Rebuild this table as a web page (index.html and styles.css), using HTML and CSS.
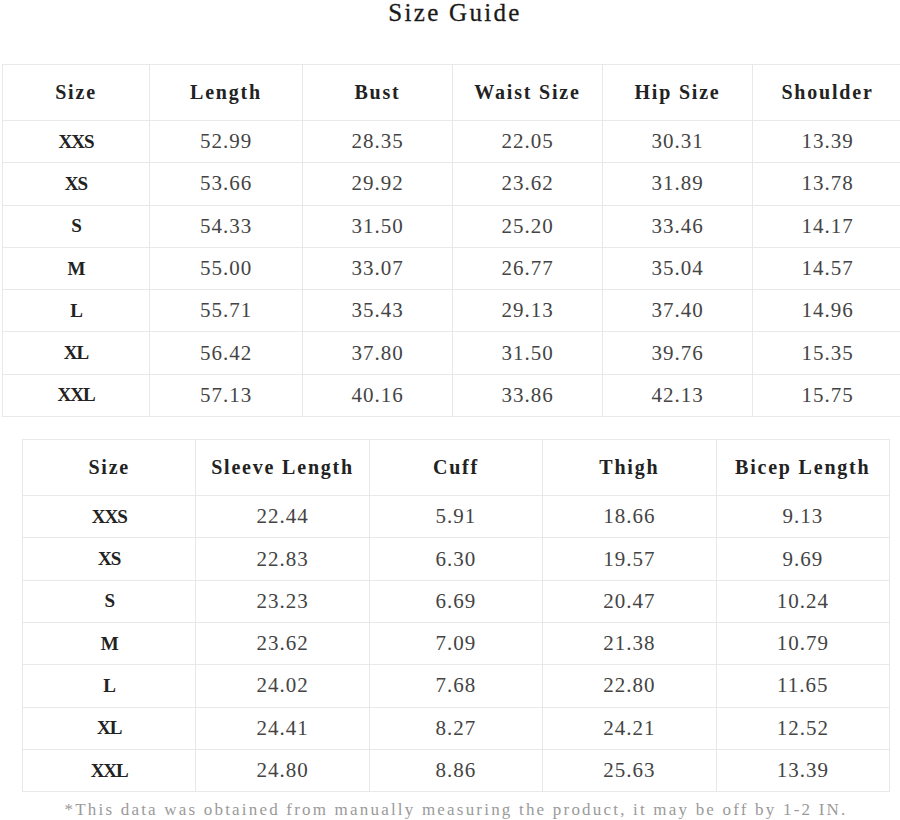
FILE: index.html
```html
<!DOCTYPE html>
<html>
<head>
<meta charset="utf-8">
<link rel="stylesheet" href="styles.css">
</head>
<body>
<div class="page">
  <h1 class="title">Size Guide</h1>
  <table class="grid grid-one">
    <colgroup>
      <col class="c1-size"><col class="c1-len"><col class="c1-std"><col class="c1-std"><col class="c1-std"><col class="c1-std">
    </colgroup>
    <thead>
      <tr><th>Size</th><th>Length</th><th>Bust</th><th>Waist Size</th><th>Hip Size</th><th>Shoulder</th></tr>
    </thead>
    <tbody>
      <tr><th>XXS</th><td>52.99</td><td>28.35</td><td>22.05</td><td>30.31</td><td>13.39</td></tr>
      <tr><th>XS</th><td>53.66</td><td>29.92</td><td>23.62</td><td>31.89</td><td>13.78</td></tr>
      <tr><th>S</th><td>54.33</td><td>31.50</td><td>25.20</td><td>33.46</td><td>14.17</td></tr>
      <tr><th>M</th><td>55.00</td><td>33.07</td><td>26.77</td><td>35.04</td><td>14.57</td></tr>
      <tr><th>L</th><td>55.71</td><td>35.43</td><td>29.13</td><td>37.40</td><td>14.96</td></tr>
      <tr><th>XL</th><td>56.42</td><td>37.80</td><td>31.50</td><td>39.76</td><td>15.35</td></tr>
      <tr><th>XXL</th><td>57.13</td><td>40.16</td><td>33.86</td><td>42.13</td><td>15.75</td></tr>
    </tbody>
  </table>
  <table class="grid grid-two">
    <colgroup>
      <col class="c2"><col class="c2"><col class="c2"><col class="c2"><col class="c2">
    </colgroup>
    <thead>
      <tr><th>Size</th><th>Sleeve Length</th><th>Cuff</th><th>Thigh</th><th>Bicep Length</th></tr>
    </thead>
    <tbody>
      <tr><th>XXS</th><td>22.44</td><td>5.91</td><td>18.66</td><td>9.13</td></tr>
      <tr><th>XS</th><td>22.83</td><td>6.30</td><td>19.57</td><td>9.69</td></tr>
      <tr><th>S</th><td>23.23</td><td>6.69</td><td>20.47</td><td>10.24</td></tr>
      <tr><th>M</th><td>23.62</td><td>7.09</td><td>21.38</td><td>10.79</td></tr>
      <tr><th>L</th><td>24.02</td><td>7.68</td><td>22.80</td><td>11.65</td></tr>
      <tr><th>XL</th><td>24.41</td><td>8.27</td><td>24.21</td><td>12.52</td></tr>
      <tr><th>XXL</th><td>24.80</td><td>8.86</td><td>25.63</td><td>13.39</td></tr>
    </tbody>
  </table>
  <p class="note">*This data was obtained from manually measuring the product, it may be off by 1-2 IN.</p>
</div>
</body>
</html>
```
FILE: styles.css
```css
html, body {
  margin: 0;
  padding: 0;
  background: #ffffff;
}
body {
  width: 900px;
  height: 820px;
  overflow: hidden;
  font-family: "Liberation Serif", "DejaVu Serif", serif;
  color: #333;
}
.page {
  display: flex;
  flex-direction: column;
  align-items: flex-start;
}
.title {
  align-self: stretch;
  margin: 0;
  padding: 0 0 0 10px;
  height: 64px;
  text-align: center;
  font-size: 25px;
  line-height: 26px;
  font-weight: normal;
  letter-spacing: 2.3px;
  color: #1a1a1a;
  -webkit-text-stroke: 0.3px #1a1a1a;
}
.grid {
  border-collapse: collapse;
  table-layout: fixed;
}
.grid th,
.grid td {
  border: 1px solid #e8e8e8;
  padding: 0;
  text-align: center;
  vertical-align: middle;
}
.grid thead th {
  height: 55px;
  font-size: 20px;
  font-weight: bold;
  letter-spacing: 1.8px;
  color: #222;
}
.grid tbody th {
  height: 41.3px;
  font-size: 19px;
  font-weight: bold;
  letter-spacing: -1px;
  color: #222;
}
.grid tbody td {
  height: 41.3px;
  font-size: 21px;
  letter-spacing: 1px;
  color: #444;
}
.grid-one {
  margin-left: 2px;
  width: 900px;
}
.c1-size { width: 147px; }
.c1-len { width: 153px; }
.c1-std { width: 150px; }
.grid-two {
  margin-top: 22px;
  margin-left: 22px;
  width: 867px;
}
.c2 { width: 173.4px; }
.note {
  align-self: stretch;
  margin: 8px 0 0 0;
  padding-left: 12px;
  text-align: center;
  font-size: 17px;
  line-height: 20px;
  letter-spacing: 2.2px;
  color: #9a9a9a;
}
```
